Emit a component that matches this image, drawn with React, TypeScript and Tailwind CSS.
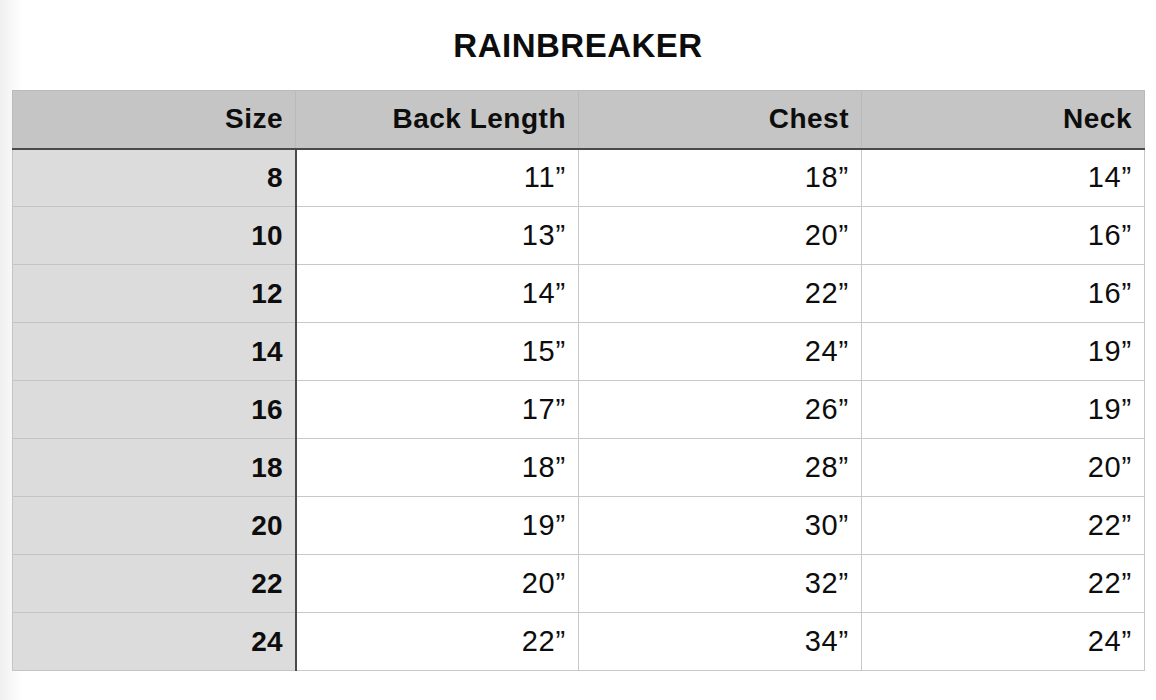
import React from 'react';

const HEADERS = ['Size', 'Back Length', 'Chest', 'Neck'];

const ROWS: [string, string, string, string][] = [
  ['8', '11”', '18”', '14”'],
  ['10', '13”', '20”', '16”'],
  ['12', '14”', '22”', '16”'],
  ['14', '15”', '24”', '19”'],
  ['16', '17”', '26”', '19”'],
  ['18', '18”', '28”', '20”'],
  ['20', '19”', '30”', '22”'],
  ['22', '20”', '32”', '22”'],
  ['24', '22”', '34”', '24”'],
];

export default function App() {
  return (
    <div
      className="w-[1156px] h-[700px] bg-[linear-gradient(to_right,#efefef,#ffffff_22px)] text-[#0d0d0d] overflow-hidden"
      style={{ fontFamily: '"Liberation Sans", Arial, sans-serif' }}
    >
      <h1 className="h-[90px] pt-[26px] text-center text-[33px] leading-[40px] font-bold tracking-[0.5px]">RAINBREAKER</h1>

      <table className="ml-[12px] w-[1132px] table-fixed border-collapse">
        <colgroup>
          <col className="w-[283px]" />
          <col className="w-[283px]" />
          <col className="w-[283px]" />
          <col className="w-[283px]" />
        </colgroup>
        <thead>
          <tr className="h-[58px] bg-[#c4c5c4]">
            {HEADERS.map(h => (
              <th key={h} className="border border-[#b9bab9] border-b-2 border-b-[#4a4a4a] pr-[12px] text-right align-middle text-[28px] font-bold tracking-[0.5px]">
                {h}
              </th>
            ))}
          </tr>
        </thead>
        <tbody>
          {ROWS.map(r => (
            <tr key={r[0]} className="h-[58px]">
              <td className="bg-[#dcdcdc] border border-[#c4c4c4] border-r-2 border-r-[#4a4a4a] pr-[12px] text-right align-middle text-[28px] font-bold">
                {r[0]}
              </td>
              {r.slice(1).map((v, i) => (
                <td key={i} className="bg-white border border-[#c8c8c8] pr-[12px] text-right align-middle text-[29px] tracking-[0.8px]">
                  {v}
                </td>
              ))}
            </tr>
          ))}
        </tbody>
      </table>
    </div>
  );
}
